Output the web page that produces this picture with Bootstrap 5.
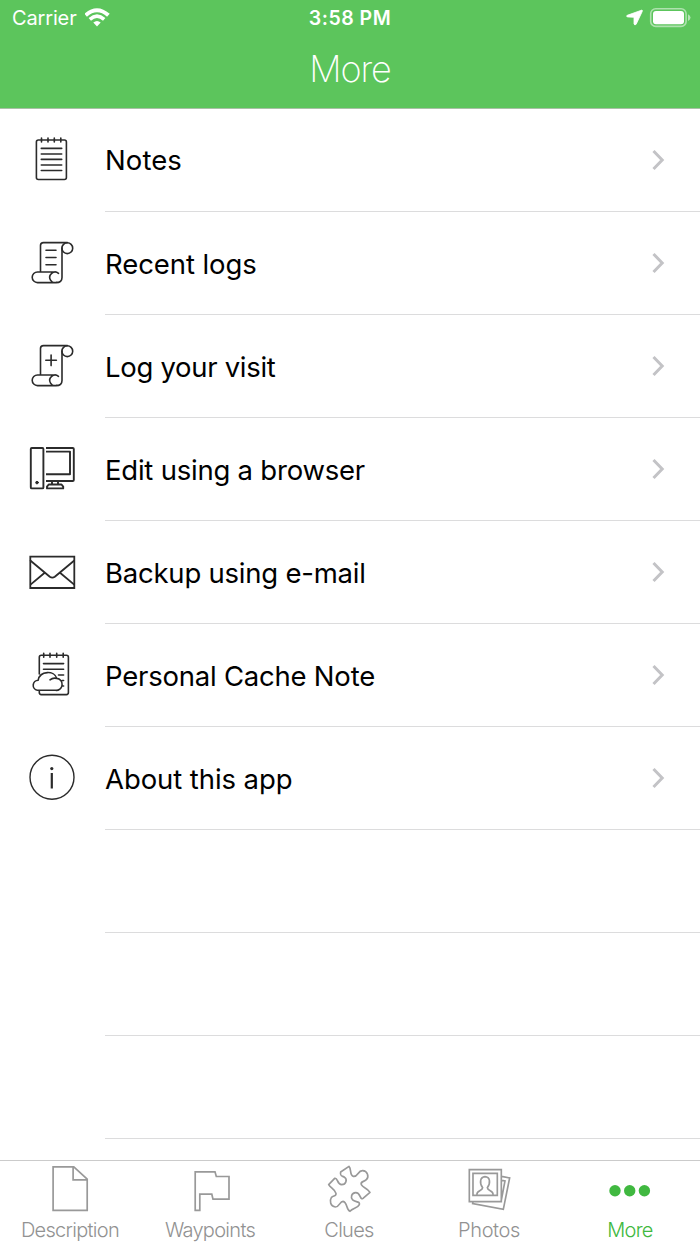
<!DOCTYPE html>
<html lang="en">
<head>
<meta charset="utf-8">
<meta name="viewport" content="width=device-width, initial-scale=1">
<title>More</title>
<link href="https://cdn.jsdelivr.net/npm/bootstrap@5.3.0/dist/css/bootstrap.min.css" rel="stylesheet">
<style>
body{font-family:Inter,"Liberation Sans",sans-serif;height:1244px;overflow:hidden;color:#000}
.top{background:#5cc55c;height:109px;border-bottom:1px solid #a9c0a6}
.status{height:36px;font-size:20px;line-height:36px}
.status>div{flex:1 1 0}
.carrier{letter-spacing:-.15px}
.clock{font-weight:600;letter-spacing:.5px;font-size:19.5px}
.power{padding-right:12px}
.power svg{margin-right:-4px}
.title{font-size:36px;font-weight:200;line-height:44px;letter-spacing:-1.1px;margin-top:11px}
.menu-row{height:103px;color:#000}
.menu-row svg{display:block;flex:none}
.menu-text{height:103px;border-bottom:1px solid #dcdcdd;font-size:27.5px;line-height:1}
.menu-text span{margin-top:3px;letter-spacing:-.22px}
.menu-row:first-child span{margin-top:2px;letter-spacing:.1px}
.menu-row:nth-child(2) span,.menu-row:nth-child(7) span{letter-spacing:-.08px}
.ink{fill:none;stroke:#2b2b2b;stroke-width:1.6;stroke-linejoin:round;stroke-linecap:round}
.tabs{height:84px;border-top:1px solid #cbcbcb;background:#fff}
.tabs a{width:140px;color:#929292;font-weight:300;font-size:20px;line-height:26px;letter-spacing:-.7px;text-align:center;text-decoration:none}
.tabs a.on{color:#40b840}
.tabs svg{display:block}
.line{fill:none;stroke:#999;stroke-width:1.7}
</style>
</head>
<body class="bg-white d-flex flex-column">
<svg width="0" height="0" class="position-absolute" aria-hidden="true">
  <symbol id="scroll" viewBox="0 0 105 102">
    <path d="M40.5 60V33.5Q40.5 30.6 43.5 30.6H67.4M62 36V65.4Q62 70.6 56 70.6H37.5A5.3 5.3 0 0 1 37.5 60H55.5M58.5 61.3A5.3 5.3 0 1 0 57 70.3"/>
    <circle cx="67.3" cy="36.2" r="5.4"/>
  </symbol>
</svg>

<header class="top text-white flex-shrink-0">
  <div class="status d-flex">
    <div class="d-flex align-items-center ps-2 ms-1"><span class="carrier">Carrier</span>
      <svg class="ms-2" width="26" height="20" viewBox="0 0 26 20" fill="none" stroke="#fff" stroke-width="4"><path d="M.6 7.3Q12 -2.8 23.4 7.3" stroke-width="4"/><path d="M4.8 11.3Q12 5 19.2 11.3" stroke-width="3.6"/><path d="M8.3 14.6Q12 11.6 15.7 14.6L12 18.5Z" fill="#fff" stroke="none"/></svg>
    </div>
    <div class="text-center clock">3:58 PM</div>
    <div class="power d-flex justify-content-end align-items-center">
      <svg width="66" height="22" viewBox="0 0 66 22"><path d="M15.9 3.1 1.2 8.3Q-.2 9.4 1.6 9.9L8 10.3V17Q8.7 18.8 10.2 17.2L16.2 4.5Q16.6 3 15.9 3.1Z" fill="#fff" stroke="#fff" stroke-width=".8"/><rect x="24.7" y="1.8" width="35.4" height="17.6" rx="5" fill="none" stroke="#fff" stroke-opacity=".5" stroke-width="1.6"/><rect x="27" y="4" width="31" height="13.2" rx="3" fill="#fff"/><path d="M62 7.3Q64.5 8.5 64.5 10.6T62 14Z" fill="#fff" fill-opacity=".55"/></svg>
    </div>
  </div>
  <h1 class="title text-center mb-0">More</h1>
</header>

<main class="flex-grow-1 overflow-hidden" id="menu">
  <a class="menu-row d-flex text-decoration-none" href="#"><svg class="ink" width="105" height="102" viewBox="0 0 105 102"><rect x="36.4" y="31" width="30" height="39.5" rx="2"/><path d="M41.5 29v4M48 29v4M54.3 29v4M60.8 29v4M41.3 39.4H61.7M41.3 45H61.7M41.3 50.4H61.7M41.3 56H61.7M41.3 61.5H61.7"/></svg><div class="menu-text flex-grow-1 d-flex align-items-center justify-content-between"><span>Notes</span></div></a>
  <a class="menu-row d-flex text-decoration-none" href="#"><svg class="ink" width="105" height="102" viewBox="0 0 105 102"><use href="#scroll"/><path d="M46 38.3H56M46 45.5H56M46 52.7H56"/></svg><div class="menu-text flex-grow-1 d-flex align-items-center justify-content-between"><span>Recent logs</span></div></a>
  <a class="menu-row d-flex text-decoration-none" href="#"><svg class="ink" width="105" height="102" viewBox="0 0 105 102"><use href="#scroll"/><path d="M45.8 45.3H56.4M51.1 40V50.6"/></svg><div class="menu-text flex-grow-1 d-flex align-items-center justify-content-between"><span style="letter-spacing:-.3px">Log your visit</span></div></a>
  <a class="menu-row d-flex text-decoration-none" href="#"><svg class="ink" width="105" height="102" viewBox="0 0 105 102"><g stroke-width="1.9"><rect x="30.8" y="30" width="12.6" height="40.4" rx="1"/><circle cx="37" cy="64.6" r="1.3" fill="#2b2b2b" stroke-width="1"/><path stroke-linecap="butt" d="M46 30H72.7Q73.8 30 73.8 31V62Q73.8 63 72.7 63H46M46 33.6H70V56.3H46M52 63v3.4M58 63v3.4M48.7 66.5H61.5L63.2 68.6V70.4H47V68.6Z"/></g></svg><div class="menu-text flex-grow-1 d-flex align-items-center justify-content-between"><span>Edit using a browser</span></div></a>
  <a class="menu-row d-flex text-decoration-none" href="#"><svg class="ink" width="105" height="102" viewBox="0 0 105 102"><g stroke-width="1.8"><path style="stroke-linejoin:miter" d="M30.3 35.6H74.3V67H30.3Z"/><path d="M30.6 39.7 49.8 55.8Q52.3 57.6 54.8 55.8L74 39.7M44.7 51.7 30.8 63.4M60 51.7 73.9 63.4"/></g></svg><div class="menu-text flex-grow-1 d-flex align-items-center justify-content-between"><span>Backup using e-mail</span></div></a>
  <a class="menu-row d-flex text-decoration-none" href="#"><svg class="ink" width="105" height="102" viewBox="0 0 105 102"><path d="M39.3 50V33.3Q39.3 31.3 41.3 31.3H66.4Q68.4 31.3 68.4 33.3V68.6Q68.4 70.6 66.4 70.6H41.3Q39.3 70.6 39.3 68.6V67M43.7 29.3v4M50 29.3v4M56.7 29.3v4M63.2 29.3v4M43.5 39.6H63.6M43.5 45.3H63.6M58.5 51H63.6M62.3 56.5H63.6M62 62H63.6M37.3 66.3H55.5A5.8 5.8 0 0 0 56.8 54.4 7.5 7.5 0 0 0 50 55.8M56.8 54.4C54.5 46.5 40 46.2 38.2 56.2A5.1 5.1 0 0 0 37.3 66.3"/></svg><div class="menu-text flex-grow-1 d-flex align-items-center justify-content-between"><span>Personal Cache Note</span></div></a>
  <a class="menu-row d-flex text-decoration-none" href="#"><svg class="ink" width="105" height="102" viewBox="0 0 105 102"><circle cx="52" cy="50.2" r="22" stroke-width="1.4"/><path d="M51.8 46V61.5" stroke-width="2.2" stroke-linecap="butt"/><circle cx="51.8" cy="41.6" r="1.6" fill="#2b2b2b" stroke="none"/></svg><div class="menu-text flex-grow-1 d-flex align-items-center justify-content-between"><span>About this app</span></div></a>
  <div class="menu-row d-flex"><svg width="105" height="102"></svg><div class="menu-text flex-grow-1"></div></div>
  <div class="menu-row d-flex"><svg width="105" height="102"></svg><div class="menu-text flex-grow-1"></div></div>
  <div class="menu-row d-flex"><svg width="105" height="102"></svg><div class="menu-text flex-grow-1"></div></div>
</main>

<nav class="tabs d-flex flex-shrink-0">
  <a href="#"><svg class="line" width="140" height="56" viewBox="0 0 140 56"><path d="M53.1 5.8H73.8L87.2 18.2V49.3H53.1ZM73.1 5.8V18.9H87.2"/></svg>Description</a>
  <a href="#"><svg class="line" width="140" height="56" viewBox="0 0 140 56"><path d="M55.2 10.8H75L76.3 15.5H89V38.2H73L71.8 33.2H59.8V49.4H55.2Z"/></svg>Waypoints</a>
  <a href="#"><svg class="line" width="140" height="56" viewBox="0 0 140 56"><g transform="translate(20 -11) scale(.3333)" stroke-width="5" stroke-linejoin="round"><path d="M122 66 147 49C155 56 148 76 160 79C174 82 173 61 188 62C203 63 208 80 199 89C192 96 180 94 184 104C189 114 202 114 210 127L189 145C180 152 182 127 167 128C154 129 151 143 158 150C166 157 181 153 178 164C173 175 158 174 150 184C138 179 143 157 129 154C119 154 119 171 106 171C91 170 88 152 94 143C100 136 109 140 108 130C105 118 92 114 86 104L104 85C114 82 110 103 125 104C139 104 142 88 134 82C127 77 119 80 122 66Z"/></g></svg><span class="d-block" style="margin-left:-2px">Clues</span></a>
  <a href="#"><svg class="line" width="140" height="56" viewBox="0 0 140 56"><g transform="translate(-120 -11) scale(.3333)" stroke-width="5"><path d="M508 59H604V155H508ZM519 70H592V136H519ZM605 79 629 84 610 178 518 161 519 156M605 91 615 93 603 156"/><path d="M531 135C528 121 547 124 548 113C537 98 541 81 555 80C570 81 573 98 562 113C563 124 582 121 579 135"/></g></svg><span class="d-block" style="margin-left:-2px;letter-spacing:-.4px">Photos</span></a>
  <a class="on" href="#"><svg width="140" height="56" viewBox="0 0 140 56" fill="#40b840"><circle cx="55" cy="29.7" r="5.7"/><circle cx="69.7" cy="29.7" r="5.7"/><circle cx="84.4" cy="29.7" r="5.7"/></svg>More</a>
</nav>
<script src="https://cdn.jsdelivr.net/npm/bootstrap@5.3.0/dist/js/bootstrap.bundle.min.js"></script>
<script>
// every linked row ends with the same disclosure chevron
document.querySelectorAll('a .menu-text').forEach(function (row) {
  row.insertAdjacentHTML('beforeend', '<svg width="48" height="24" viewBox="0 0 48 24" fill="none" stroke="#c3c3c6" stroke-width="3"><path d="M1.5 3 10.2 12 1.5 21"/></svg>');
});
</script>
</body>
</html>
